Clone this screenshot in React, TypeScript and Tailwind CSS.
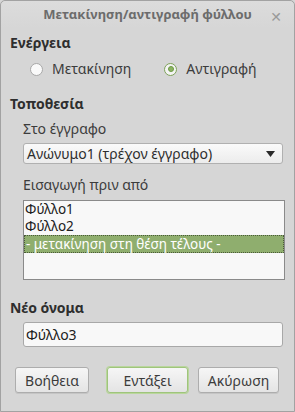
import React from 'react';

const font = { fontFamily: '"Noto Sans", "DejaVu Sans", sans-serif' };

const Radio: React.FC<{ checked?: boolean; label: string }> = ({ checked, label }) => (
  <label className="flex items-center gap-[9px]">
    <span
      className={`w-[13px] h-[13px] rounded-full border flex items-center justify-center ${
        checked ? 'border-[#7ea25a] bg-[#f4f4f4]' : 'border-[#a8a8a8] bg-[#fafafa]'
      }`}
    >
      {checked && <span className="w-[6px] h-[6px] rounded-full bg-[#8cb563] border border-[#6f9a48]" />}
    </span>
    <span className="text-[#3c3c3c]">{label}</span>
  </label>
);

const Button: React.FC<{ label: string; focused?: boolean; className?: string }> = ({ label, focused, className }) => (
  <button
    className={`h-[26px] rounded-[3px] border bg-gradient-to-b from-[#f6f6f6] to-[#e4e4e4] text-[#3c3c3c] shadow-[0_1px_0_rgba(0,0,0,0.08)] ${
      focused ? 'border-[#9fc47c] ring-1 ring-[#b9d69c]' : 'border-[#adadad]'
    } ${className ?? ''}`}
  >
    {label}
  </button>
);

export default function App() {
  return (
    <div className="w-[295px] h-[412px] bg-[#d6d6d6]" style={font}>
      <div className="w-full h-full flex flex-col border border-[#a2a2a2] rounded-t-[5px] bg-[#d6d6d6] text-[14px] text-[#3c3c3c]">
        {/* Title bar */}
        <div className="relative h-[27px] flex items-center justify-center rounded-t-[5px] bg-gradient-to-b from-[#dcdcdc] to-[#d6d6d6]">
          <span className="font-bold text-[#6c6c6c] text-[13px]">Μετακίνηση/αντιγραφή φύλλου</span>
          <span className="absolute right-[12px] top-[5px] text-[#9a9a9a] font-bold text-[14px]">✕</span>
        </div>

        <div className="flex flex-col px-[9px]">
          {/* Action */}
          <div className="font-bold text-[#2e2e2e] mt-[6px] leading-[18px]">Ενέργεια</div>
          <div className="flex items-center mt-[8px] pl-[20px] gap-[33px] leading-[18px]">
            <Radio label="Μετακίνηση" />
            <Radio checked label="Αντιγραφή" />
          </div>

          {/* Location */}
          <div className="font-bold text-[#2e2e2e] mt-[17px] leading-[18px]">Τοποθεσία</div>
          <div className="pl-[13px] mt-[7px] leading-[18px]">Στο έγγραφο</div>
          <div className="ml-[13px] mr-[2px] mt-[5px] h-[21px] flex items-center justify-between px-[3px] rounded-[3px] border border-[#b0b0b0] bg-gradient-to-b from-[#fafafa] to-[#ececec] text-[#2e2e2e]">
            <span>Ανώνυμο1 (τρέχον έγγραφο)</span>
            <svg width="9" height="6" viewBox="0 0 9 6" className="mr-[4px]">
              <path d="M0 0 L9 0 L4.5 6 Z" fill="#2a2a2a" />
            </svg>
          </div>
          <div className="pl-[13px] mt-[12px] leading-[18px]">Εισαγωγή πριν από</div>
          <div className="ml-[13px] mt-[6px] h-[80px] border border-[#8a8a8a] bg-[#f8f8f8] flex flex-col text-[13.5px] leading-[17px] text-[#202020]">
            <div className="pl-[1px] h-[17px]">Φύλλο1</div>
            <div className="pl-[1px] h-[17px]">Φύλλο2</div>
            <div className="pl-[1px] h-[18px] bg-[#8fae6e] text-white border border-dotted border-[#4a5a3a] leading-[16px]">- μετακίνηση στη θέση τέλους -</div>
          </div>

          {/* New name */}
          <div className="font-bold text-[#2e2e2e] mt-[19px] leading-[18px]">Νέο όνομα</div>
          <div className="ml-[13px] mr-[2px] mt-[5px] h-[25px] flex items-center px-[2px] rounded-[3px] border border-[#a8a8a8] bg-[#f8f8f8] text-[#202020]">
            Φύλλο3
          </div>

          {/* Buttons */}
          <div className="flex mt-[20px] pl-[5px] gap-[18px]">
            <Button label="Βοήθεια" className="w-[74px]" />
            <div className="flex gap-[10px]">
              <Button label="Εντάξει" focused className="w-[81px]" />
              <Button label="Ακύρωση" className="w-[81px]" />
            </div>
          </div>
        </div>
      </div>
    </div>
  );
}
